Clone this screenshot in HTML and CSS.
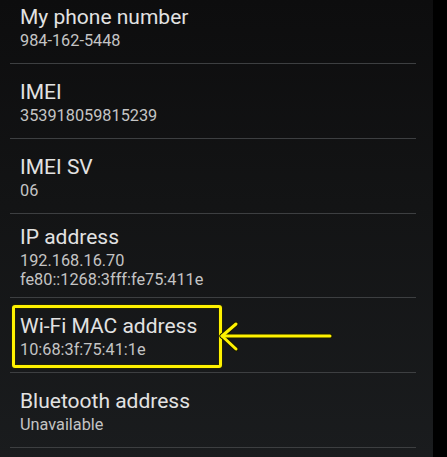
FILE: index.html
```html
<!DOCTYPE html>
<html lang="en">
<head>
<meta charset="utf-8">
<title>Status</title>
<link rel="stylesheet" href="styles.css">
</head>
<body>
<div class="screen">
  <div class="panel">
    <ul class="list">
      <li class="row">
        <div class="title">My phone number</div>
        <div class="sub">984-162-5448</div>
      </li>
      <li class="row">
        <div class="title">IMEI</div>
        <div class="sub">353918059815239</div>
      </li>
      <li class="row">
        <div class="title">IMEI SV</div>
        <div class="sub">06</div>
      </li>
      <li class="row">
        <div class="title">IP address</div>
        <div class="sub">192.168.16.70</div>
        <div class="sub">fe80::1268:3fff:fe75:411e</div>
      </li>
      <li class="row row--marked">
        <div class="title">Wi-Fi MAC address</div>
        <div class="sub">10:68:3f:75:41:1e</div>
        <span class="highlight"></span>
        <svg class="arrow" width="120" height="40" viewBox="0 0 120 40" aria-hidden="true">
          <g fill="none" stroke="#1a1a00" stroke-width="5" stroke-linecap="round" stroke-linejoin="round">
            <path d="M4 20 H112"/>
            <path d="M18 8 L4 20 L18 33"/>
          </g>
          <g fill="none" stroke="#fff200" stroke-width="3" stroke-linecap="round" stroke-linejoin="round">
            <path d="M4 20 H112"/>
            <path d="M18 8 L4 20 L18 33"/>
          </g>
        </svg>
      </li>
      <li class="row">
        <div class="title">Bluetooth address</div>
        <div class="sub">Unavailable</div>
      </li>
    </ul>
  </div>
  <div class="edge"></div>
</div>
</body>
</html>
```

FILE: styles.css
```css
* {
  box-sizing: border-box;
}

html, body {
  margin: 0;
  padding: 0;
  height: 100%;
  background: #000;
  overflow: hidden;
}

.screen {
  display: flex;
  height: 457px;
}

.panel {
  flex: 0 0 433px;
  background: linear-gradient(180deg, #0d0d0e 0%, #131415 45%, #1a1c1e 100%);
  overflow: hidden;
}

.edge {
  flex: 1;
  background: #000;
}

.list {
  list-style: none;
  margin: -11px 0 0 10px;
  padding: 0;
  width: 406px;
  font-family: Roboto, "Noto Sans", sans-serif;
}

.row {
  position: relative;
  display: flex;
  flex-direction: column;
  justify-content: center;
  min-height: 75px;
  padding: 9px 10px 8px;
  border-bottom: 1px solid #3d3f41;
}

.title {
  font-size: 21px;
  line-height: 28px;
  color: #e2e2e2;
}

.sub {
  font-size: 16.3px;
  line-height: 19px;
  color: #c4c4c4;
}

.highlight {
  position: absolute;
  left: 2px;
  top: 7px;
  width: 210px;
  height: 63px;
  border: 3px solid #fff200;
  border-radius: 3px;
  box-shadow: 0 0 0 1px rgba(40, 40, 0, 0.6), inset 0 0 0 1px rgba(40, 40, 0, 0.6);
}

.arrow {
  position: absolute;
  left: 208px;
  top: 18px;
}
```
